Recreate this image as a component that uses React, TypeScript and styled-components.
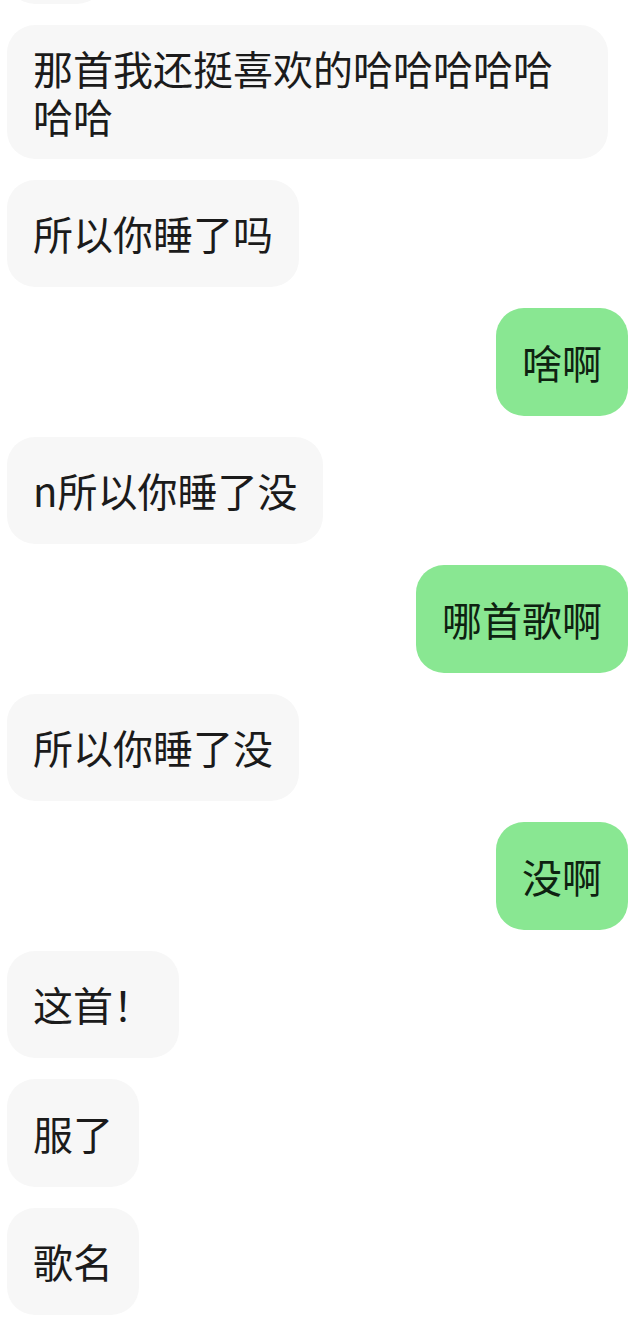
import React from 'react';
import styled, {createGlobalStyle} from 'styled-components';

type Side = 'left' | 'right';

interface Message {
  id: number;
  side: Side;
  text: string;
}

const messages: Message[] = [
  {id: 1, side: 'left', text: '那首我还挺喜欢的哈哈哈哈哈哈哈'},
  {id: 2, side: 'left', text: '所以你睡了吗'},
  {id: 3, side: 'right', text: '啥啊'},
  {id: 4, side: 'left', text: 'n所以你睡了没'},
  {id: 5, side: 'right', text: '哪首歌啊'},
  {id: 6, side: 'left', text: '所以你睡了没'},
  {id: 7, side: 'right', text: '没啊'},
  {id: 8, side: 'left', text: '这首！'},
  {id: 9, side: 'left', text: '服了'},
  {id: 10, side: 'left', text: '歌名'},
];

const GlobalStyle = createGlobalStyle`
  html, body {
    margin: 0;
    padding: 0;
    background: #ffffff;
  }
  body {
    font-family: "Noto Sans CJK SC", "Noto Sans", sans-serif;
  }
`;

const ChatList = styled.div`
  display: flex;
  flex-direction: column;
  gap: 21px;
  width: 640px;
  height: 1324px;
  overflow: hidden;
  box-sizing: border-box;
  padding: 0 12px 0 7px;
`;

const Row = styled.div<{$side: Side}>`
  display: flex;
  justify-content: ${(p) => (p.$side === 'right' ? 'flex-end' : 'flex-start')};
  flex-shrink: 0;
`;

const Bubble = styled.div<{$side: Side}>`
  display: flex;
  align-items: center;
  box-sizing: border-box;
  max-width: 601px;
  min-height: 107.5px;
  padding: 19px 26px;
  border-radius: 28px;
  background: ${(p) => (p.$side === 'right' ? '#89e792' : '#f7f7f7')};
  color: ${(p) => (p.$side === 'right' ? '#0e2211' : '#1b1b1b')};
  font-size: 40px;
  line-height: 48px;
  word-break: break-all;
`;

/* bottom edge of an earlier message, scrolled mostly out of view */
const ScrolledBubble = styled(Bubble)`
  width: 98px;
  margin-top: -104px;
`;

const App: React.FC = () => {
  return (
    <>
      <GlobalStyle />
      <ChatList>
        <Row $side="left">
          <ScrolledBubble $side="left" />
        </Row>
        {messages.map((m) => (
          <Row key={m.id} $side={m.side}>
            <Bubble $side={m.side}>{m.text}</Bubble>
          </Row>
        ))}
      </ChatList>
    </>
  );
};

export default App;
